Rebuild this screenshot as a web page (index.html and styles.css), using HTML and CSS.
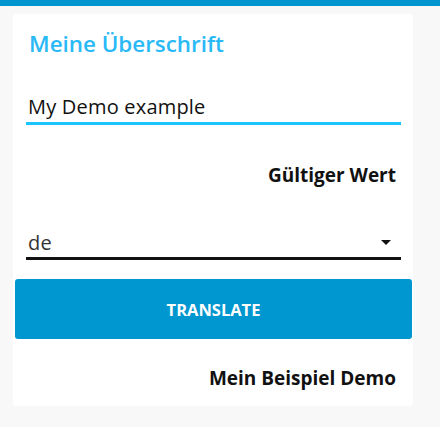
FILE: index.html
```html
<!DOCTYPE html>
<html lang="de">
<head>
<meta charset="utf-8">
<link rel="stylesheet" href="styles.css">
</head>
<body>
<div class="topbar"></div>
<div class="card">
  <h1 class="title">Meine Überschrift</h1>
  <div class="field field-active">
    <span class="field-value">My Demo example</span>
  </div>
  <div class="note">Gültiger Wert</div>
  <div class="field field-select">
    <span class="field-value">de</span>
    <svg class="arrow" width="10" height="5" viewBox="0 0 10 5"><path d="M0 0h10L5 5z" fill="#111"/></svg>
  </div>
  <button class="btn">TRANSLATE</button>
  <div class="note result">Mein Beispiel Demo</div>
</div>
</body>
</html>
```
FILE: styles.css
```css
html, body {
  margin: 0;
  padding: 0;
}
body {
  background: #f8f8f8;
  font-family: "Open Sans", "Noto Sans", sans-serif;
  color: #111;
  height: 427px;
  overflow: hidden;
}
.topbar {
  height: 6px;
  background: #0095cf;
}
.card {
  background: #fff;
  margin: 8px 27px 0 13px;
  height: 392px;
  box-sizing: border-box;
  padding: 15px 12px 0 13px;
  border-radius: 2px;
}
.title {
  margin: 0 0 0 3px;
  font-size: 22.4px;
  font-weight: 600;
  color: #29b9f7;
  line-height: 30px;
}
.field {
  display: flex;
  align-items: flex-start;
  justify-content: space-between;
  padding: 0 10px 0 2px;
}
.field-value {
  font-size: 20px;
  line-height: 24px;
  letter-spacing: 0.2px;
}
.field-active {
  margin-top: 36px;
  padding-bottom: 3px;
  border-bottom: 3px solid #1cc5ff;
}
.note {
  text-align: right;
  font-weight: 700;
  font-size: 19px;
  line-height: 24px;
  padding-right: 5px;
  margin-top: 38px;
}
.field-select {
  margin-top: 44px;
  padding-bottom: 2px;
  border-bottom: 3px solid #111;
}
.field-select .field-value {
  color: #333;
}
.arrow {
  display: block;
  margin-top: 9px;
}
.btn {
  display: block;
  width: 397px;
  margin: 19px 0 0 -11px;
  height: 60px;
  border: 0;
  border-radius: 3px;
  background: #0096d0;
  color: #fff;
  font-family: inherit;
  font-weight: 700;
  font-size: 16.5px;
  padding: 0;
}
.result {
  margin-top: 27px;
}
```
